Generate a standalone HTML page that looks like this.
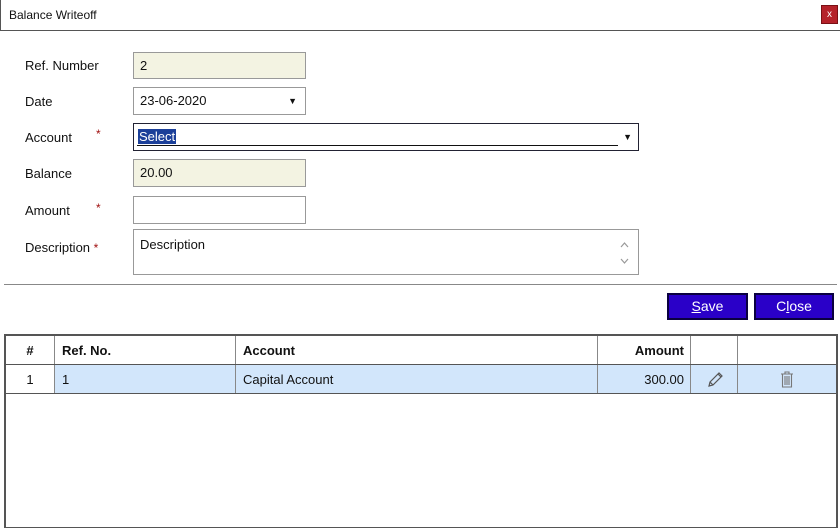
<!DOCTYPE html><html><head><style>
*{box-sizing:border-box;margin:0;padding:0}
body{width:840px;height:528px;background:#fff;font-family:"Liberation Sans",sans-serif;font-size:13px;color:#111;position:relative;overflow:hidden}
.a{position:absolute}
.lbl{position:absolute;left:25px;font-size:13px}
.star{position:absolute;color:#a01010;font-size:12px}
.inp{position:absolute;border:1px solid #999;background:#fff;padding-left:6px;line-height:26px;font-size:13px}
.btn{position:absolute;top:293px;height:27px;background:#2a00c8;border:2px solid #0a0040;color:#fff;text-align:center;line-height:23px;font-size:14px}
.cell{position:absolute;border-right:1px solid #888;height:100%}
</style></head><body>
<div class="a" style="left:0;top:0;width:840px;height:31px;border-bottom:1px solid #555;border-left:1px solid #555"></div>
<div class="a" style="left:9px;top:8px;font-size:12px">Balance Writeoff</div>
<div class="a" style="left:821px;top:5px;width:17px;height:19px;background:#b5222a;border:1px solid #7a1015;color:#fff;font-size:10px;text-align:center;line-height:17px">x</div>

<div class="lbl" style="top:58px">Ref. Number</div>
<div class="inp" style="left:133px;top:52px;width:173px;height:27px;background:#f3f3e2">2</div>
<div class="lbl" style="top:94px">Date</div>
<div class="inp" style="left:133px;top:87px;width:173px;height:28px">23-06-2020<span class="a" style="right:8px;top:0;font-size:9px">▼</span></div>
<div class="lbl" style="top:130px">Account</div><div class="star" style="left:96px;top:127px">*</div>
<div class="inp" style="left:133px;top:123px;width:506px;height:28px;border:1px solid #223">
<span style="background:#1b3f99;color:#fff;margin-left:-2px;padding:0 1px">Select</span>
<div class="a" style="left:3px;right:20px;top:21px;border-top:1px solid #111"></div>
<span class="a" style="right:6px;top:0;font-size:9px">▼</span></div>
<div class="lbl" style="top:166px">Balance</div>
<div class="inp" style="left:133px;top:159px;width:173px;height:28px;background:#f3f3e2">20.00</div>
<div class="lbl" style="top:203px">Amount</div><div class="star" style="left:96px;top:201px">*</div>
<div class="inp" style="left:133px;top:196px;width:173px;height:28px"></div>
<div class="lbl" style="top:240px">Description <span style="color:#a01010;font-size:12px">*</span></div>
<div class="inp" style="left:133px;top:229px;width:506px;height:46px;line-height:30px">Description
<svg class="a" style="right:9px;top:8px" width="9" height="30" viewBox="0 0 9 30"><path d="M1 9 L4.5 5 L8 9 M1 21 L4.5 25 L8 21" fill="none" stroke="#999" stroke-width="1.2"/></svg></div>
<div class="a" style="left:4px;top:284px;width:833px;border-top:1px solid #888"></div>
<div class="btn" style="left:667px;width:81px"><u>S</u>ave</div>
<div class="btn" style="left:754px;width:80px">C<u>l</u>ose</div>

<div class="a" style="left:4px;top:334px;width:834px;height:194px;border:2px solid #555;border-bottom:1px solid #555">
 <div class="a" style="left:0;top:0;width:100%;height:29px;border-bottom:1px solid #555;font-weight:bold;font-size:13px">
  <div class="cell" style="left:0;width:49px;text-align:center;line-height:29px">#</div>
  <div class="cell" style="left:49px;width:181px;padding-left:7px;line-height:29px">Ref. No.</div>
  <div class="cell" style="left:230px;width:362px;padding-left:7px;line-height:29px">Account</div>
  <div class="cell" style="left:592px;width:93px;text-align:right;padding-right:6px;line-height:29px">Amount</div>
  <div class="cell" style="left:685px;width:47px"></div>
 </div>
 <div class="a" style="left:0;top:29px;width:100%;height:29px;border-bottom:1px solid #555;background:#d2e6fb">
  <div class="cell" style="left:0;width:49px;text-align:center;line-height:29px;background:#fff">1</div>
  <div class="cell" style="left:49px;width:181px;padding-left:7px;line-height:29px">1</div>
  <div class="cell" style="left:230px;width:362px;padding-left:7px;line-height:29px">Capital Account</div>
  <div class="cell" style="left:592px;width:93px;text-align:right;padding-right:6px;line-height:29px">300.00</div>
  <div class="cell" style="left:685px;width:47px"><svg class="a" style="left:15px;top:6px" width="18" height="17" viewBox="0 0 18 17"><path d="M3 15 L4 11 L13 2 L16 5 L7 14 Z M4 11 L7 14 M12 3 L15 6" fill="none" stroke="#555" stroke-width="1.2"/></svg></div>
  <div class="a" style="left:732px;width:100px;height:100%"><svg class="a" style="left:42px;top:6px" width="14" height="17" viewBox="0 0 14 17"><path d="M1 3 H13 M5 3 V1 H9 V3 M2.5 3 V16 H11.5 V3 M5 5 V14 M7 5 V14 M9 5 V14" fill="none" stroke="#777" stroke-width="1.1"/></svg></div>
 </div>
</div>
</body></html>
